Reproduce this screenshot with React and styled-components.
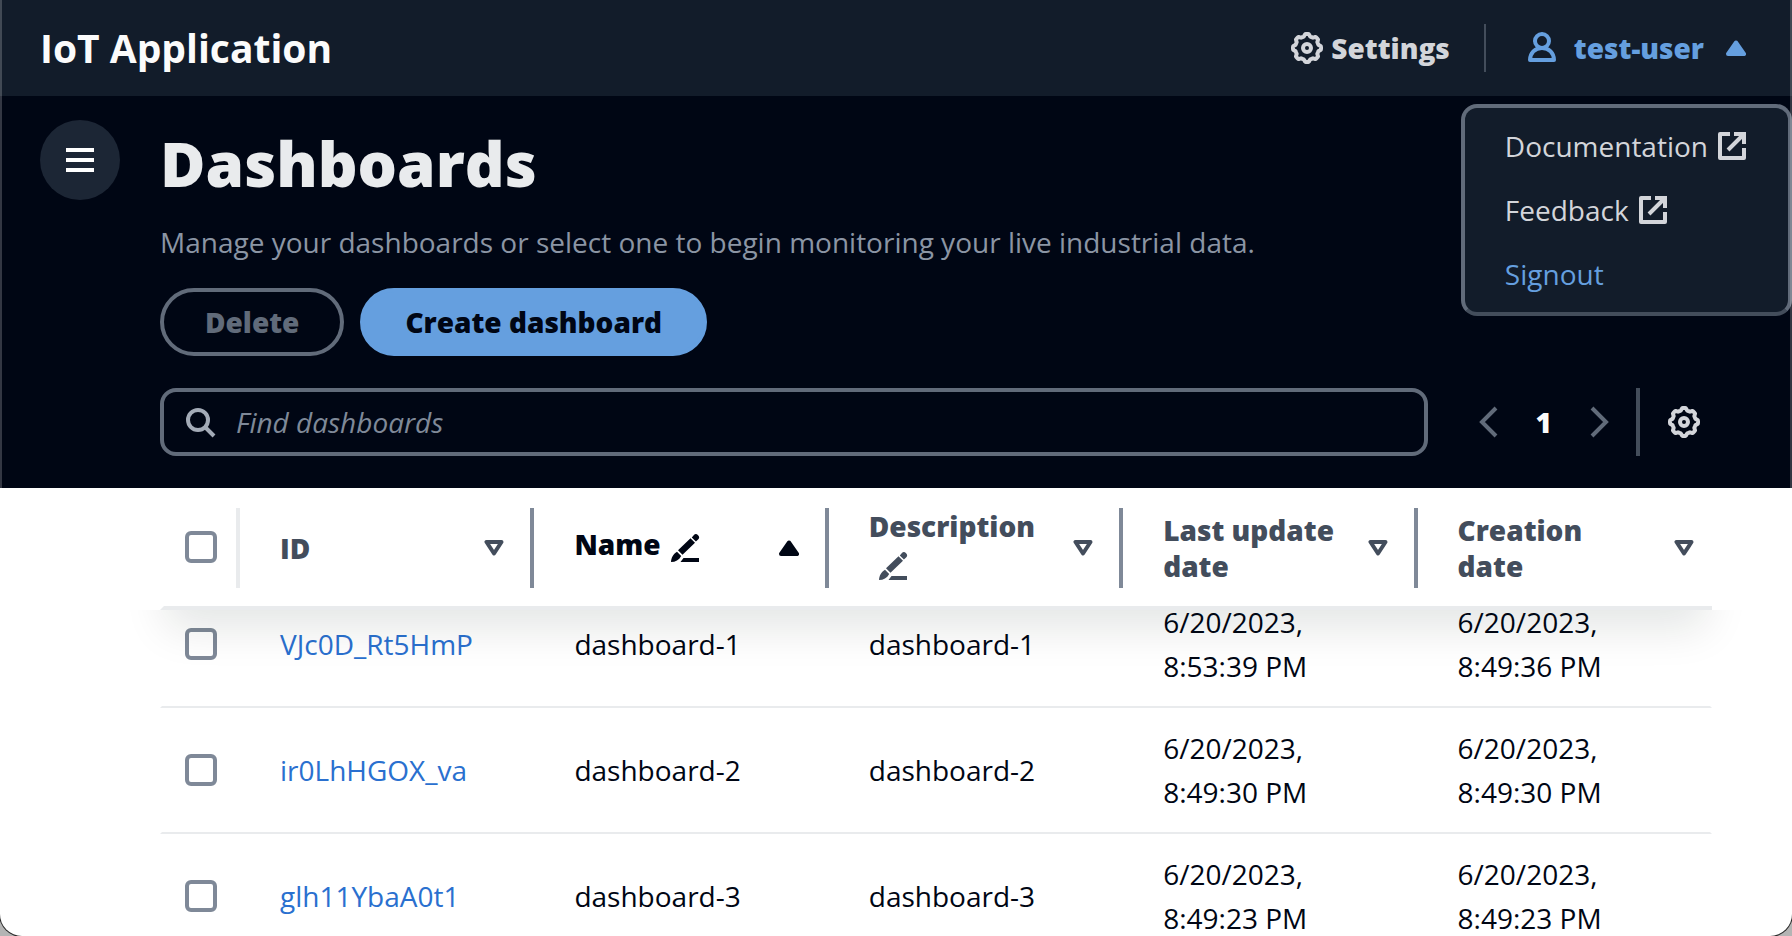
import React, { useLayoutEffect, useRef, useState } from 'react'
import styled, { createGlobalStyle, css } from 'styled-components'

const colors = {
  page: '#000614',
  panel: '#121c2a',
  raised: '#1c2635',
  border: '#616b7a',
  divider: '#434d5b',
  line: '#e9ebed',
  muted: '#8b95a4',
  light: '#d3d5da',
  accent: '#659fdf',
  link: '#2a70cf',
  heading: '#434d5c',
  control: '#7f8998',
}

const GlobalStyle = createGlobalStyle`
  * {
    box-sizing: border-box;
  }
  body {
    margin: 0;
    background: #b4b4b4;
    font-family: 'Open Sans', 'Noto Sans', sans-serif;
    font-size: 28px;
    line-height: 44px;
    color: ${colors.page};
  }
  button,
  input {
    font: inherit;
  }
  button {
    border: none;
    background: none;
    padding: 0;
    cursor: pointer;
  }
  a {
    text-decoration: none;
  }
`

const Window = styled.div`
  position: relative;
  display: flex;
  flex-direction: column;
  height: 100vh;
  overflow: hidden;
  background: #fff;
  border-radius: 0 0 22px 22px;
  box-shadow: 0 0 0 1px #2a2a2a;
  &::after {
    content: '';
    position: absolute;
    inset: 0;
    border: solid rgba(255, 255, 255, 0.2);
    border-width: 0 2px;
    border-radius: inherit;
    pointer-events: none;
    z-index: 5;
  }
`

const TopBar = styled.header`
  position: relative;
  display: flex;
  align-items: center;
  justify-content: space-between;
  height: 96px;
  padding: 0 46px 0 40px;
  background: ${colors.panel};
`

const AppTitle = styled.a`
  font-size: 39px;
  font-weight: 700;
  color: #fbfbfb;
`

const Utilities = styled.nav`
  display: flex;
  align-items: center;
`

const UtilityButton = styled.button`
  display: flex;
  align-items: center;
  gap: 8px;
  font-weight: 800;
  color: ${colors.light};
`

const UserButton = styled(UtilityButton)`
  gap: 16px;
  color: ${colors.accent};
  svg:last-child {
    margin-left: 6px;
  }
`

const UtilityDivider = styled.span`
  width: 2px;
  height: 48px;
  margin: 0 40px 0 34px;
  background: ${colors.divider};
`

const Menu = styled.ul`
  position: absolute;
  top: 104px;
  right: 0;
  z-index: 4;
  margin: 0;
  padding: 6px 40px;
  list-style: none;
  background: ${colors.panel};
  border: 4px solid ${colors.border};
  border-bottom-color: ${colors.divider};
  border-radius: 16px;
`

const MenuLink = styled.a`
  display: flex;
  align-items: center;
  gap: 8px;
  padding: 10px 0;
  color: ${(p) => (p.$accent ? colors.accent : colors.light)};
`

const Hero = styled.section`
  display: flex;
  align-items: flex-start;
  gap: 40px;
  padding: 24px 80px 32px 40px;
  background: ${colors.page};
`

const NavToggle = styled.button`
  display: flex;
  align-items: center;
  justify-content: center;
  flex: none;
  width: 80px;
  height: 80px;
  border-radius: 50%;
  background: ${colors.raised};
  color: #fff;
`

const HeroContent = styled.div`
  flex: 1;
  min-width: 0;
`

const Title = styled.h1`
  margin: 3px 0 17px;
  font-size: 62px;
  line-height: 80px;
  font-weight: 800;
  color: ${colors.line};
`

const Description = styled.p`
  margin: 0 0 24px;
  color: ${colors.muted};
`

const Actions = styled.div`
  display: flex;
  gap: 16px;
  margin-bottom: 32px;
`

const Button = styled.button`
  height: 68px;
  padding: 0 41px;
  border: 4px solid ${colors.border};
  border-radius: 34px;
  font-weight: 800;
  color: ${colors.border};
  ${(p) =>
    p.$primary &&
    css`
      border-color: ${colors.accent};
      background: ${colors.accent};
      color: ${colors.page};
    `}
`

const Tools = styled.div`
  display: flex;
  align-items: center;
  padding-right: 12px;
`

const SearchBox = styled.label`
  display: flex;
  align-items: center;
  flex: 1;
  gap: 20px;
  height: 68px;
  padding: 0 20px;
  border: 4px solid ${colors.border};
  border-radius: 16px;
  color: #a3abb7;
  input {
    flex: 1;
    min-width: 0;
    padding: 0;
    border: none;
    outline: none;
    background: transparent;
    color: ${colors.line};
  }
  input::placeholder {
    color: ${colors.control};
    font-style: italic;
    opacity: 1;
  }
`

const Pagination = styled.div`
  display: flex;
  align-items: center;
  gap: 38px;
  margin: 0 26px 0 50px;
  color: ${colors.border};
`

const PageNumber = styled.button`
  font-weight: 800;
  color: #fbfbfb;
`

const PageArrow = styled.button`
  display: flex;
  color: ${colors.border};
`

const Preferences = styled.button`
  display: flex;
  align-items: center;
  height: 68px;
  padding-left: 28px;
  border-left: 4px solid ${colors.divider};
  color: ${colors.light};
`

const TableScroll = styled.div`
  flex: 1;
  min-height: 0;
  overflow: auto;
  padding: 0 80px 0 160px;
  scrollbar-width: none;
`

const Table = styled.table`
  width: 100%;
  table-layout: fixed;
  border-collapse: separate;
  border-spacing: 0;
`

const Head = styled.thead`
  position: sticky;
  top: 0;
  z-index: 2;
  &::after {
    content: '';
    position: absolute;
    inset: 0;
    box-shadow: 0 24px 44px -6px rgba(0, 28, 20, 0.11);
    clip-path: inset(100% -64px -96px);
    pointer-events: none;
  }
`

const HeadCell = styled.th`
  position: relative;
  width: ${(p) => p.$width || 'auto'};
  height: 122px;
  padding: ${(p) => (p.$select ? '0 0 0 21px' : '2px 30px 0 40px')};
  border-bottom: 4px solid ${colors.line};
  background: #fff;
  text-align: left;
  line-height: 36px;
  font-weight: 800;
  color: ${(p) => (p.$sorted ? colors.page : colors.heading)};
  &:not(:last-child)::after {
    content: '';
    position: absolute;
    top: 20px;
    bottom: 18px;
    right: 0;
    width: 4px;
    background: ${(p) => (p.$select ? colors.line : colors.control)};
  }
  &:first-child {
    border-left: 4px solid transparent;
  }
  &:last-child {
    padding-right: 18px;
  }
`

const HeadContent = styled.div`
  display: flex;
  align-items: center;
  justify-content: space-between;
  gap: 20px;
`

const SortButton = styled.button`
  display: flex;
  color: inherit;
`

const Cell = styled.td`
  height: 126px;
  padding: ${(p) => (p.$select ? '0 0 0 23px' : '0 40px')};
  border-bottom: 2px solid ${colors.line};
  &:first-child {
    border-left: 2px solid transparent;
  }
  &:last-child {
    border-right: 2px solid transparent;
  }
  a {
    color: ${colors.link};
  }
`

const Checkbox = styled.input`
  display: block;
  appearance: none;
  width: 32px;
  height: 32px;
  margin: 0;
  border: 4px solid ${colors.control};
  border-radius: 6px;
  background: #fff;
  &:checked {
    background: ${colors.link};
  }
`

const EditIcon = styled.svg`
  display: inline-block;
  margin: 0 0 6px 8px;
  vertical-align: -15px;
`

// 16-unit grid, drawn at 32px
const GearIcon = () => {
  const points = []
  for (let i = 0; i < 96; i++) {
    const a = (i / 96) * Math.PI * 2
    const wave = Math.max(-1, Math.min(1, Math.cos(a * 8) * 1.8))
    const r = 6.45 + wave * 0.55
    points.push(`${(8 + r * Math.sin(a)).toFixed(2)},${(8 - r * Math.cos(a)).toFixed(2)}`)
  }
  return (
    <svg width="32" height="32" viewBox="0 0 16 16" fill="none" stroke="currentColor" strokeWidth="2" strokeLinejoin="round">
      <polygon points={points.join(' ')} />
      <circle cx="8" cy="8" r="2" />
    </svg>
  )
}

const UserIcon = () => (
  <svg width="32" height="32" viewBox="0 0 16 16" fill="none" stroke="currentColor" strokeWidth="2" strokeLinejoin="round">
    <circle cx="8" cy="4.500" r="3.500" />
    <path d="M2 14c0-3.500 2.500-6 6-6s6 2.500 6 6z" />
  </svg>
)

const ExternalIcon = () => (
  <svg width="32" height="32" viewBox="0 0 16 16" fill="none" stroke="currentColor" strokeWidth="2" strokeLinejoin="round">
    <path d="M14 9v5H2V2h5" />
    <path d="M9 2h5v5M14 2 6 10" strokeLinejoin="miter" />
  </svg>
)

const SearchIcon = () => (
  <svg width="32" height="32" viewBox="0 0 16 16" fill="none" stroke="currentColor" strokeWidth="2">
    <circle cx="7" cy="7" r="5" />
    <path d="m10.500 10.500 4.500 4.500" />
  </svg>
)

const MenuIcon = () => (
  <svg width="32" height="32" viewBox="0 0 16 16" stroke="currentColor" strokeWidth="2">
    <path d="M1 3h14M1 8h14M1 13h14" />
  </svg>
)

const Chevron = ({ next }) => (
  <svg width="20" height="32" viewBox="0 0 10 16" fill="none" stroke="currentColor" strokeWidth="2">
    <path d={next ? 'm1 1 7 7-7 7' : 'M9 1 2 8l7 7'} />
  </svg>
)

const Caret = ({ up, filled }) => (
  <svg width="20" height="16" viewBox="0 0 20 16" fill={filled ? 'currentColor' : 'none'} stroke="currentColor" strokeWidth="4" strokeLinejoin="round">
    <path d={up ? 'M10 2.500 18 14H2z' : 'M10 13.500 2.500 2h15z'} />
  </svg>
)

const Pencil = () => (
  <EditIcon width="32" height="32" viewBox="0 0 32 32" fill="currentColor">
    <path d="m22.800 5.400 1.900-2.200a3 3 0 0 1 4.400 4.300l-2.200 2zM9 18.300 21.500 6.200l4.500 4.500L13.500 22.800zM2 30c.3-4 2-8 6-10.200l4.200 4.200C10 28 6.500 30 2 30zM14.500 26H30v4H11.500z" />
  </EditIcon>
)

const columns = [
  { id: 'id', label: 'ID' },
  { id: 'name', label: 'Name', editable: true, sorted: true },
  { id: 'description', label: 'Description', editable: true },
  { id: 'updated', label: 'Last update date' },
  { id: 'created', label: 'Creation date' },
]

const dashboards = [
  {
    id: 'VJc0D_Rt5HmP',
    name: 'dashboard-1',
    updated: '6/20/2023, 8:53:39 PM',
    created: '6/20/2023, 8:49:36 PM',
  },
  {
    id: 'ir0LhHGOX_va',
    name: 'dashboard-2',
    updated: '6/20/2023, 8:49:30 PM',
    created: '6/20/2023, 8:49:30 PM',
  },
  {
    id: 'glh11YbaA0t1',
    name: 'dashboard-3',
    updated: '6/20/2023, 8:49:23 PM',
    created: '6/20/2023, 8:49:23 PM',
  },
]

function App() {
  const [menuOpen, setMenuOpen] = useState(true)
  const scroller = useRef(null)

  useLayoutEffect(() => {
    scroller.current.scrollTop = 28
  }, [])

  return (
    <React.Fragment>
      <GlobalStyle />
      <Window>
        <TopBar>
          <AppTitle href="#">IoT Application</AppTitle>
          <Utilities>
            <UtilityButton>
              <GearIcon />
              Settings
            </UtilityButton>
            <UtilityDivider />
            <UserButton aria-expanded={menuOpen} onClick={() => setMenuOpen(!menuOpen)}>
              <UserIcon />
              test-user
              <Caret up={menuOpen} filled />
            </UserButton>
          </Utilities>
          {menuOpen && (
            <Menu>
              <li>
                <MenuLink href="#">
                  Documentation
                  <ExternalIcon />
                </MenuLink>
              </li>
              <li>
                <MenuLink href="#">
                  Feedback
                  <ExternalIcon />
                </MenuLink>
              </li>
              <li>
                <MenuLink href="#" $accent>
                  Signout
                </MenuLink>
              </li>
            </Menu>
          )}
        </TopBar>

        <Hero>
          <NavToggle aria-label="Open navigation">
            <MenuIcon />
          </NavToggle>
          <HeroContent>
            <Title>Dashboards</Title>
            <Description>
              Manage your dashboards or select one to begin monitoring your live
              industrial data.
            </Description>
            <Actions>
              <Button disabled>Delete</Button>
              <Button $primary>Create dashboard</Button>
            </Actions>
            <Tools>
              <SearchBox>
                <SearchIcon />
                <input type="text" placeholder="Find dashboards" aria-label="Find dashboards" />
              </SearchBox>
              <Pagination>
                <PageArrow aria-label="Previous page">
                  <Chevron />
                </PageArrow>
                <PageNumber>1</PageNumber>
                <PageArrow aria-label="Next page">
                  <Chevron next />
                </PageArrow>
              </Pagination>
              <Preferences aria-label="Preferences">
                <GearIcon />
              </Preferences>
            </Tools>
          </HeroContent>
        </Hero>

        <TableScroll ref={scroller}>
          <Table>
            <Head>
              <tr>
                <HeadCell $select $width="80px">
                  <Checkbox type="checkbox" aria-label="Select all dashboards" />
                </HeadCell>
                {columns.map((col) => (
                  <HeadCell key={col.id} $sorted={col.sorted}>
                    <HeadContent>
                      <span>
                        {col.label}
                        {col.editable && <Pencil />}
                      </span>
                      <SortButton aria-label={`Sort by ${col.label}`}>
                        <Caret up={col.sorted} filled={col.sorted} />
                      </SortButton>
                    </HeadContent>
                  </HeadCell>
                ))}
              </tr>
            </Head>
            <tbody>
              {dashboards.map((row) => (
                <tr key={row.id}>
                  <Cell $select>
                    <Checkbox type="checkbox" aria-label={`Select ${row.name}`} />
                  </Cell>
                  <Cell>
                    <a href="#">{row.id}</a>
                  </Cell>
                  <Cell>{row.name}</Cell>
                  <Cell>{row.name}</Cell>
                  <Cell>{row.updated}</Cell>
                  <Cell>{row.created}</Cell>
                </tr>
              ))}
            </tbody>
          </Table>
        </TableScroll>
      </Window>
    </React.Fragment>
  )
}

export default App
